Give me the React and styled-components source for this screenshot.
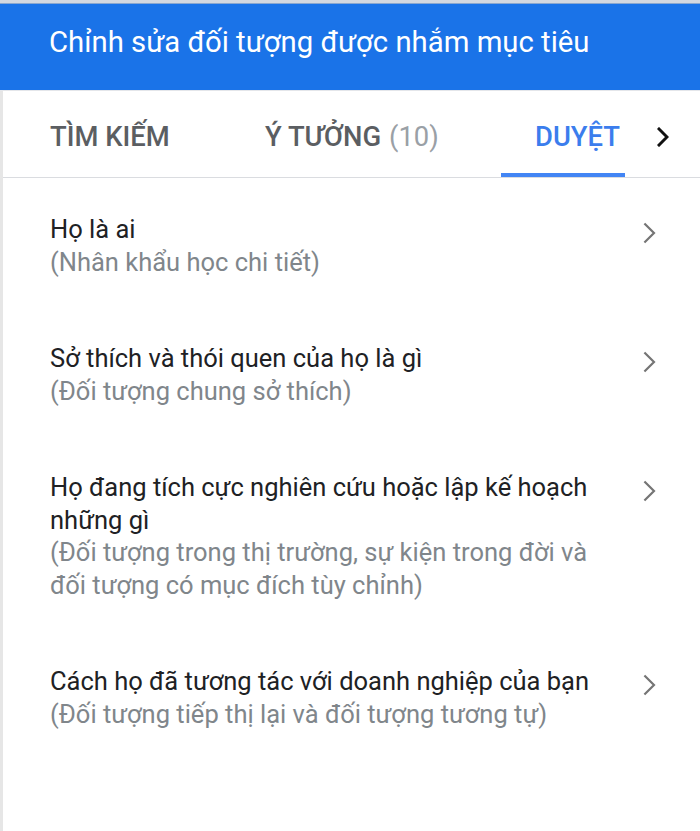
import React from "react";
import styled, { createGlobalStyle } from "styled-components";

const Global = createGlobalStyle`
  html, body { margin: 0; padding: 0; background: #ffffff; }
  body { font-family: Roboto, "Noto Sans", "Liberation Sans", sans-serif; }
`;

const Frame = styled.div`
  width: 700px;
  height: 831px;
  box-sizing: border-box;
  border-top: 3px solid #d3d8e0;
  display: flex;
  flex-direction: column;
  overflow: hidden;
`;

const Header = styled.header`
  height: 88px;
  box-sizing: border-box;
  background: #1a73e8;
  border-top: 1px solid #8aa7cf;
  border-bottom: 1px solid #e4e6ea;
  padding: 0 0 0 49px;
  display: flex;
  align-items: center;
`;

const Title = styled.h1`
  margin: 0 0 10px;
  color: #ffffff;
  font-size: 29.3px;
  font-weight: 400;
  white-space: nowrap;
`;

const Body = styled.div`
  flex: 1;
  border-left: 3px solid #e6e6e6;
  display: flex;
  flex-direction: column;
`;

const TabBar = styled.nav`
  height: 87px;
  box-sizing: border-box;
  border-bottom: 1px solid #dadce0;
  display: flex;
  align-items: stretch;
  padding-left: 47px;
`;

const Tab = styled.div`
  position: relative;
  display: flex;
  align-items: center;
  box-sizing: border-box;
  width: ${(p) => p.$w}px;
  padding-left: ${(p) => p.$pl || 0}px;
  padding-top: 5px;
  font-size: 27.4px;
  font-weight: 500;
  white-space: nowrap;
  color: ${(p) => (p.$active ? "#3b7ded" : "#5b5e62")};
  &::after {
    content: "";
    display: ${(p) => (p.$active ? "block" : "none")};
    position: absolute;
    left: 0;
    right: 0;
    bottom: 0;
    height: 4px;
    background: #4285f4;
  }
`;

const Count = styled.span`
  color: #9aa0a6;
  font-weight: 400;
  margin-left: 8px;
`;

const TabArrow = styled.div`
  display: flex;
  align-items: center;
  margin-left: 32px;
  padding-top: 5px;
`;

const List = styled.ul`
  list-style: none;
  margin: 0;
  padding: 0;
`;

const Item = styled.li`
  display: flex;
  align-items: flex-start;
  padding: 35px 0 29px 47px;
`;

const Texts = styled.div`
  width: 560px;
  font-size: 25.5px;
  line-height: 32.5px;
  white-space: nowrap;
`;

const ItemTitle = styled.div`
  color: #202124;
`;

const ItemSub = styled.div`
  color: #80868b;
`;

const Chevron = styled.div`
  margin-left: 33px;
  padding-top: 9px;
  display: flex;
`;

const ChevronRight = ({ color, width = 2, size = 22 }) => (
  <svg width={size * 0.6} height={size} viewBox="0 0 12 20" fill="none">
    <path d="M2 2 L10 10 L2 18" stroke={color} strokeWidth={width} strokeLinecap="square" />
  </svg>
);

const items = [
  { title: ["Họ là ai"], sub: ["(Nhân khẩu học chi tiết)"] },
  { title: ["Sở thích và thói quen của họ là gì"], sub: ["(Đối tượng chung sở thích)"] },
  {
    title: ["Họ đang tích cực nghiên cứu hoặc lập kế hoạch", "những gì"],
    sub: ["(Đối tượng trong thị trường, sự kiện trong đời và", "đối tượng có mục đích tùy chỉnh)"],
  },
  { title: ["Cách họ đã tương tác với doanh nghiệp của bạn"], sub: ["(Đối tượng tiếp thị lại và đối tượng tương tự)"] },
];

export default function App() {
  return (
    <>
      <Global />
      <Frame>
        <Header>
          <Title>Chỉnh sửa đối tượng được nhắm mục tiêu</Title>
        </Header>
        <Body>
          <TabBar>
            <Tab $w={215}>TÌM KIẾM</Tab>
            <Tab $w={236}>
              Ý TƯỞNG<Count>(10)</Count>
            </Tab>
            <Tab $w={124} $pl={34} $active>DUYỆT</Tab>
            <TabArrow>
              <ChevronRight color="#111" width={3} size={20} />
            </TabArrow>
          </TabBar>
          <List>
            {items.map((it, i) => (
              <Item key={i}>
                <Texts>
                  {it.title.map((t, j) => (
                    <ItemTitle key={j}>{t}</ItemTitle>
                  ))}
                  {it.sub.map((t, j) => (
                    <ItemSub key={j}>{t}</ItemSub>
                  ))}
                </Texts>
                <Chevron>
                  <ChevronRight color="#757575" width={2} size={22} />
                </Chevron>
              </Item>
            ))}
          </List>
        </Body>
      </Frame>
    </>
  );
}
